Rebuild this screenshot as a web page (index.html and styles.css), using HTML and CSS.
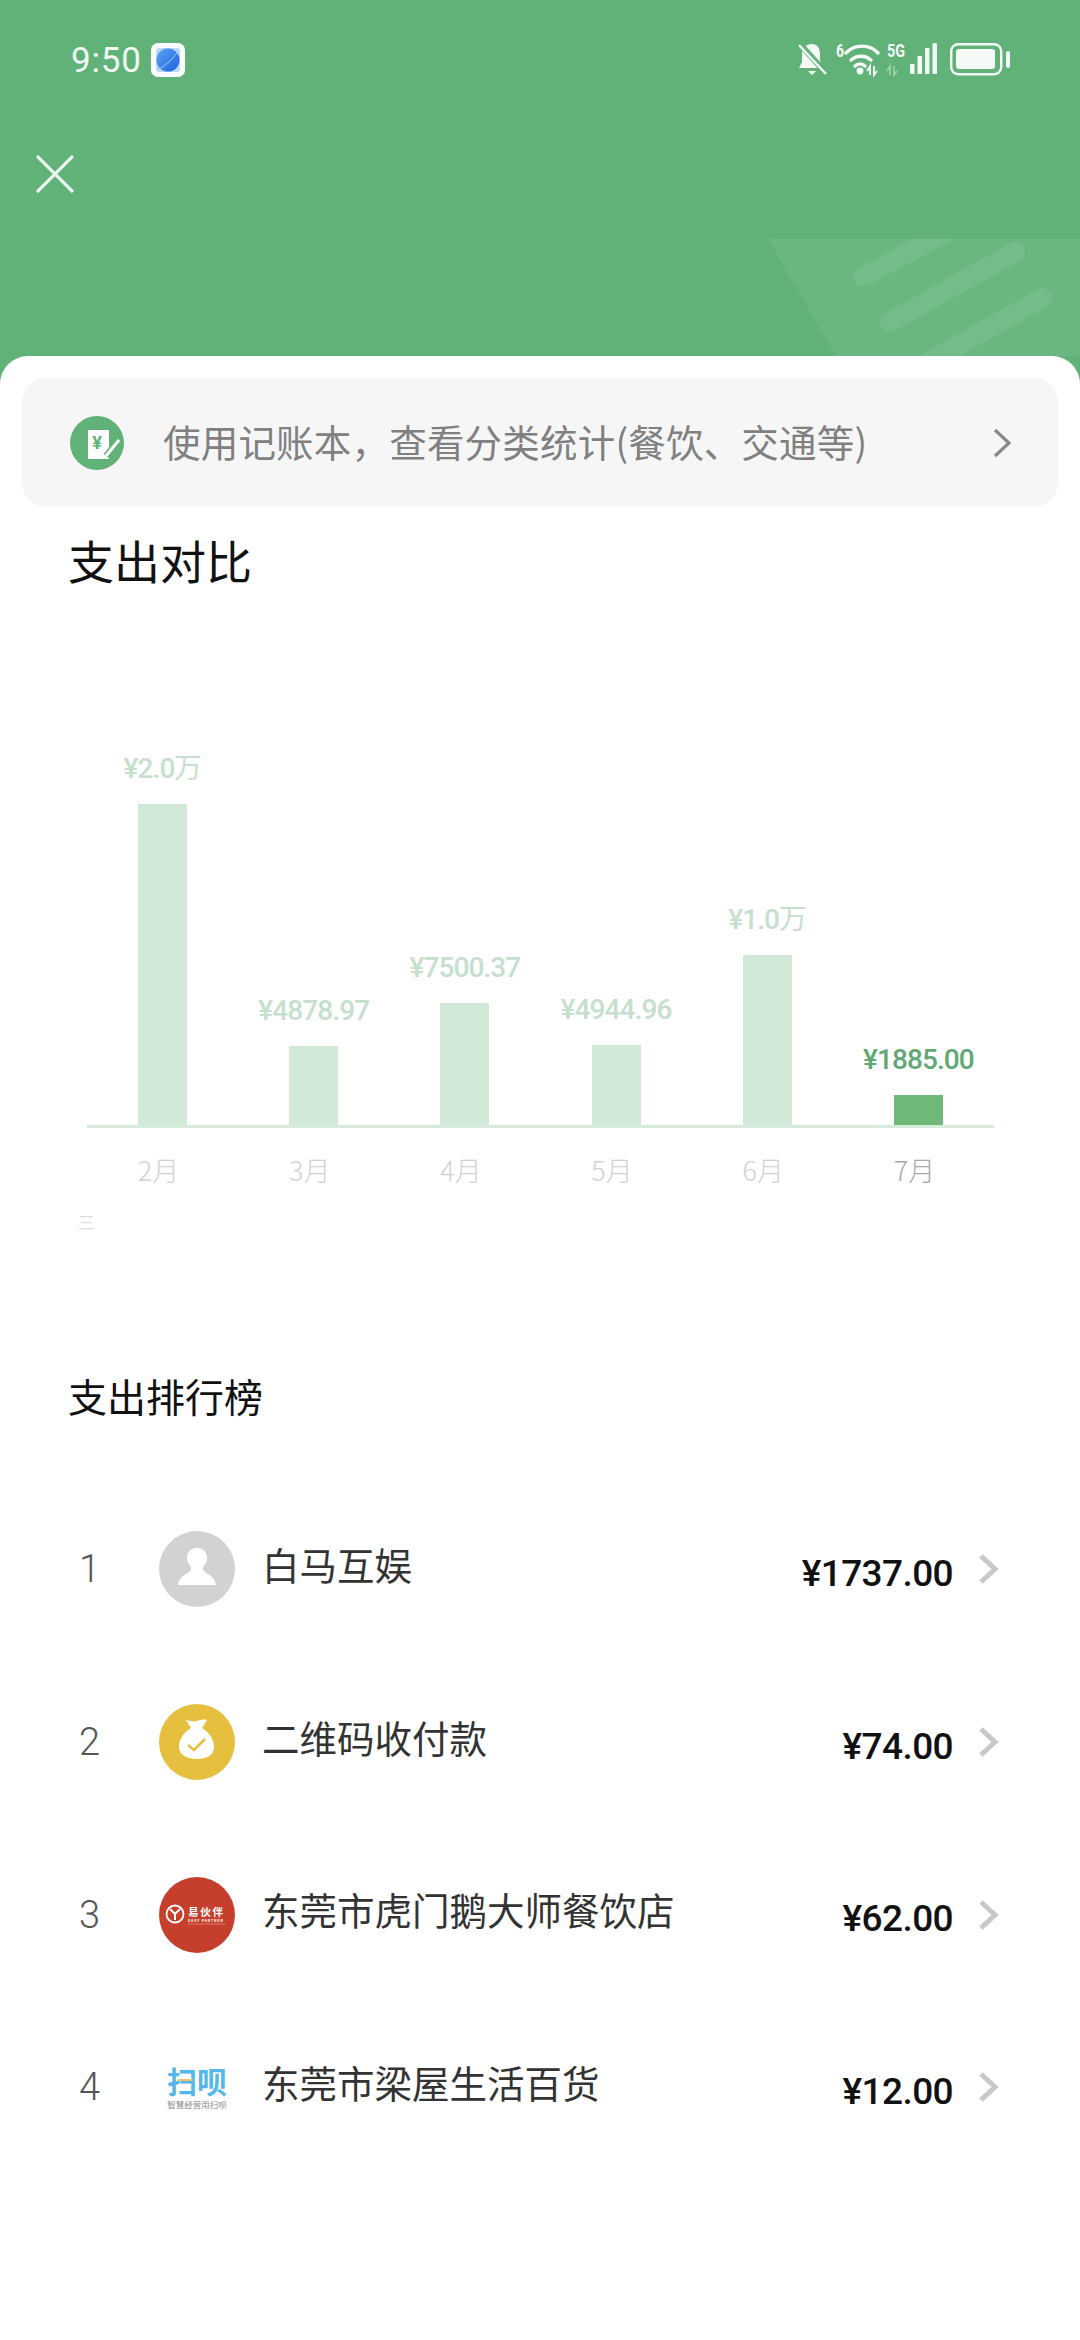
FILE: index.html
```html
<!DOCTYPE html>
<html lang="zh-CN">
<head>
  <meta charset="UTF-8" />
  <meta name="viewport" content="width=device-width, initial-scale=1.0"/>
  <title>支出统计</title>
  <link rel="stylesheet" href="styles.css">
</head>
<body>

  <header class="top">
    <div class="status">
      <div class="status-left">
        <span class="time">9:50</span>
        <svg class="app-icon" width="34" height="34" viewBox="0 0 34 34">
          <defs>
            <linearGradient id="planet" x1="0" y1="0" x2="1" y2="1">
              <stop offset="0" stop-color="#5aa4f2"/>
              <stop offset="1" stop-color="#1f5fe0"/>
            </linearGradient>
          </defs>
          <rect width="34" height="34" rx="7" fill="#fff"/>
          <rect x="5" y="5" width="24" height="24" rx="3" fill="#b9d8fb"/>
          <circle cx="17" cy="17" r="11.5" fill="url(#planet)"/>
          <path d="M6 27C12 25 25 14 28 6" fill="none" stroke="#a9d4fb" stroke-width=".9"/>
        </svg>
      </div>
      <svg class="status-right" width="230" height="60" viewBox="0 0 230 60">
        <path d="M22 14c5 0 8 4 8 10v6l2 8H9l3-6v-8c0-6 4-10 10-10z" fill="#f4faf6"/>
        <path d="M18 41h8l-4 4z" fill="#f4faf6"/>
        <path d="M9 13l27 30" stroke="#60b278" stroke-width="6"/>
        <path d="M9 15l27 29" stroke="#f4faf6" stroke-width="2.4"/>
        <text x="46" y="27" class="net-text" font-size="19" textLength="8" lengthAdjust="spacingAndGlyphs">6</text>
        <g fill="none" stroke="#f4faf6" stroke-linecap="round" stroke-width="3.4">
          <path d="M56 23A22 22 0 0 1 88 23"/>
          <path d="M61 30A15 15 0 0 1 81 30"/>
          <path d="M65 36A7 7 0 0 1 75 36"/>
        </g>
        <circle cx="70" cy="41" r="3.4" fill="#f4faf6"/>
        <path d="M80 45v-9l-3 5M84 36v9l3-4" fill="none" stroke="#f4faf6" stroke-width="1.8"/>
        <text x="97" y="27" class="net-text" font-size="18" textLength="18" lengthAdjust="spacingAndGlyphs">5G</text>
        <path d="M100 45v-9l-3 5M104 36v9l3-4" fill="none" stroke="#f4faf6" stroke-width="1.8" opacity=".4"/>
        <g fill="#f4faf6">
          <rect x="120" y="34" width="4.500" height="10" rx="1"/>
          <rect x="127.500" y="26" width="4.500" height="18" rx="1"/>
          <rect x="135" y="18" width="4.500" height="26" rx="1"/>
          <rect x="142.500" y="13" width="4.500" height="31" rx="1"/>
          <rect x="166" y="19" width="39" height="20" rx="3"/>
          <rect x="216" y="21" width="4" height="17" rx="2"/>
        </g>
        <rect x="161.200" y="14.200" width="50" height="30" rx="7" fill="none" stroke="#f4faf6" stroke-width="2.400"/>
      </svg>
    </div>

    <nav class="nav">
      <svg width="38" height="38" viewBox="0 0 38 38">
        <path d="M1 1l36 36M37 1L1 37" stroke="#eef8f1" stroke-width="3.2"/>
      </svg>
    </nav>

    <svg class="hero-band" width="1080" height="117" viewBox="0 0 1080 117">
      <polygon points="768,0 1080,0 1080,117 836,117" fill="#fff" fill-opacity=".07"/>
      <g stroke="#fff" stroke-opacity=".08" stroke-width="20" stroke-linecap="round" fill="none">
        <path d="M863 38L945 -6"/>
        <path d="M890 83L1015 13"/>
        <path d="M925 125L1042 59"/>
      </g>
    </svg>
  </header>

  <main class="sheet">
    <div class="tip">
      <svg width="54" height="54" viewBox="0 0 54 54">
        <circle cx="27" cy="27" r="27" fill="#60b278"/>
        <rect x="18" y="14" width="21" height="29" fill="#fff"/>
        <text x="27" y="33" class="tip-yen" font-size="18" text-anchor="middle">¥</text>
        <path d="M36 40L49 24" stroke="#60b278" stroke-width="6"/>
        <path d="M36 40L49 24" stroke="#fff" stroke-width="3"/>
      </svg>
      <span class="tip-text">使用记账本，查看分类统计(餐饮、交通等)</span>
      <svg class="tip-arrow" width="20" height="30" viewBox="0 0 20 30">
        <path d="M3 2l14 13L3 28" fill="none" stroke="#888" stroke-width="3.200"/>
      </svg>
    </div>

    <h2 class="compare-title">支出对比</h2>

    <div class="plot">
      <div class="col">
        <span class="value">¥2.0万</span>
        <div class="bar" style="height: 321px"></div>
      </div>
      <div class="col">
        <span class="value">¥4878.97</span>
        <div class="bar" style="height: 79px"></div>
      </div>
      <div class="col">
        <span class="value">¥7500.37</span>
        <div class="bar" style="height: 122px"></div>
      </div>
      <div class="col">
        <span class="value">¥4944.96</span>
        <div class="bar" style="height: 80px"></div>
      </div>
      <div class="col">
        <span class="value">¥1.0万</span>
        <div class="bar" style="height: 170px"></div>
      </div>
      <div class="col current">
        <span class="value">¥1885.00</span>
        <div class="bar" style="height: 30px"></div>
      </div>
    </div>
    <div class="months">
      <span>2月</span>
      <span>3月</span>
      <span>4月</span>
      <span>5月</span>
      <span>6月</span>
      <span class="current">7月</span>
    </div>
    <div class="stub">三</div>

    <h2 class="rank-title">支出排行榜</h2>

    <ul class="rank">
      <li class="row">
        <span class="num">1</span>
        <svg class="avatar" width="76" height="76" viewBox="0 0 76 76">
          <circle cx="38" cy="38" r="38" fill="#d2d2d2"/>
          <path d="M38 17c-6 0-10 4-10 10 0 4 2 7 4 9v3c-3 4-9 5-12 11l-1 4h38l-1-4c-3-6-9-7-12-11v-3c2-2 4-5 4-9 0-6-4-10-10-10z" fill="#fff"/>
        </svg>
        <span class="name">白马互娱</span>
        <span class="amount">¥1737.00</span>
        <svg class="arrow" width="20" height="30" viewBox="0 0 20 30">
          <path d="M2 2l14 13L2 28" fill="none" stroke="#c8c8cc" stroke-width="5"/>
        </svg>
      </li>
      <li class="row">
        <span class="num">2</span>
        <svg class="avatar" width="76" height="76" viewBox="0 0 76 76">
          <circle cx="38" cy="38" r="38" fill="#e6bf3f"/>
          <path d="M27 16c5 1 8 2 11 1 3-1 7-2 10-1l-5 8c7 4 12 11 12 19 0 8-7 12-17 12s-18-4-18-12c0-8 5-15 12-19z" fill="#fff"/>
          <path d="M29 41l6 5 11-11" fill="none" stroke="#e6bf3f" stroke-width="2.600"/>
        </svg>
        <span class="name">二维码收付款</span>
        <span class="amount">¥74.00</span>
        <svg class="arrow" width="20" height="30" viewBox="0 0 20 30">
          <path d="M2 2l14 13L2 28" fill="none" stroke="#c8c8cc" stroke-width="5"/>
        </svg>
      </li>
      <li class="row">
        <span class="num">3</span>
        <svg class="avatar" width="76" height="76" viewBox="0 0 76 76">
          <circle cx="38" cy="38" r="38" fill="#c63f2c"/>
          <circle cx="16" cy="37" r="8.500" fill="none" stroke="#fff" stroke-width="1.800"/>
          <path d="M11 32l5 5 5-5M16 37v6" fill="none" stroke="#fff" stroke-width="2"/>
          <text x="29" y="39" class="logo-text" font-size="10.500" textLength="35">易伙伴</text>
          <text x="29" y="45" class="logo-text" font-size="3.500" textLength="35">EASY PARTNER</text>
          <path d="M29 47h37" stroke="#e9a79b" stroke-width=".6"/>
        </svg>
        <span class="name">东莞市虎门鹅大师餐饮店</span>
        <span class="amount">¥62.00</span>
        <svg class="arrow" width="20" height="30" viewBox="0 0 20 30">
          <path d="M2 2l14 13L2 28" fill="none" stroke="#c8c8cc" stroke-width="5"/>
        </svg>
      </li>
      <li class="row">
        <span class="num">4</span>
        <div class="logo">
          <span class="logo-main">扫呗<i class="logo-bar"></i></span>
          <span class="logo-sub">智慧经营用扫呗</span>
        </div>
        <span class="name">东莞市梁屋生活百货</span>
        <span class="amount">¥12.00</span>
        <svg class="arrow" width="20" height="30" viewBox="0 0 20 30">
          <path d="M2 2l14 13L2 28" fill="none" stroke="#c8c8cc" stroke-width="5"/>
        </svg>
      </li>
    </ul>
  </main>

</body>
</html>
```

FILE: styles.css
```css
body {
  margin: 0;
  height: 2340px;
  overflow: hidden;
  background: #60b278;
  font-family: "Noto Sans CJK SC", Roboto, sans-serif;
}

h2, ul {
  margin: 0;
  padding: 0;
  font-weight: 400;
}

svg {
  display: block;
  flex: none;
}

/* green header */
.top {
  background: #60b278;
}

.status {
  height: 120px;
  padding: 0 60px 0 71px;
  display: flex;
  align-items: center;
  justify-content: space-between;
}

.status-left {
  display: flex;
  align-items: center;
  gap: 9px;
}

.time {
  font-family: Roboto, sans-serif;
  font-size: 35px;
  letter-spacing: 0.8px;
  color: #f1f9f3;
}

.net-text {
  font-family: Roboto, sans-serif;
  font-weight: 700;
  fill: #f4faf6;
}

.nav {
  box-sizing: border-box;
  height: 119px;
  padding: 0 0 12px 36px;
  display: flex;
  align-items: center;
}

/* white sheet */
.sheet {
  box-sizing: border-box;
  height: 1984px;
  background: #fff;
  border-radius: 28px 28px 0 0;
  padding-top: 22px;
}

.tip {
  margin: 0 22px;
  height: 129px;
  padding: 0 46px 0 48px;
  background: #f6f6f6;
  border-radius: 24px;
  display: flex;
  align-items: center;
  gap: 39px;
}

.tip-text {
  margin-bottom: 5px;
  font-size: 37.5px;
  letter-spacing: 0.2px;
  color: #808080;
  flex: 1;
  white-space: nowrap;
}

.tip-yen {
  font-family: Roboto, sans-serif;
  font-weight: 700;
  fill: #60b278;
}

.compare-title {
  margin: 22px 0 0 68px;
  font-size: 46px;
  line-height: 60px;
  color: #111;
}

/* bar chart */
.plot {
  margin: 0 0 0 87px;
  width: 907px;
  height: 536px;
  display: grid;
  grid-template-columns: repeat(6, 1fr);
  align-items: end;
  border-bottom: 3px solid #d6ebdb;
}

.col {
  display: flex;
  flex-direction: column;
  align-items: center;
  color: #c5e0cc;
}

.col.current {
  color: #62a875;
}

.value {
  font-family: Roboto, sans-serif;
  font-size: 28px;
  font-weight: 500;
  letter-spacing: -0.9px;
  line-height: 30px;
  margin-bottom: 20px;
  white-space: nowrap;
}

.bar {
  width: 49px;
  background: #d3e9d7;
}

.current .bar {
  background: #6fb878;
}

.months {
  margin-left: 87px;
  width: 907px;
  padding-top: 22px;
  display: grid;
  grid-template-columns: repeat(6, 1fr);
  font-size: 27px;
  font-weight: 300;
  line-height: 40px;
  text-align: center;
  color: #d2d2d2;
}

.months span {
  padding-right: 8px;
}

.months .current {
  color: #a8a8a8;
}

/* leftover legend glyph under the chart */
.stub {
  margin: 18px 0 0 78px;
  font-size: 17px;
  line-height: 28px;
  color: #ddd;
}

.rank-title {
  margin: 131px 0 0 68px;
  font-size: 39px;
  line-height: 56px;
  color: #111;
}

/* ranking list */
.rank {
  margin-top: 60px;
  list-style: none;
}

.row {
  height: 172.7px;
  padding: 0 81px 0 79px;
  display: flex;
  align-items: center;
}

.num {
  width: 80px;
  font-family: Roboto, sans-serif;
  font-size: 38px;
  font-weight: 300;
  color: #555;
}

.name {
  margin: 0 0 12px 27px;
  font-size: 37.5px;
  color: #333;
  white-space: nowrap;
}

.amount {
  margin: 8px 0 0 auto;
  font-family: Roboto, sans-serif;
  font-size: 37px;
  font-weight: 500;
  letter-spacing: -0.6px;
  color: #111;
}

.arrow {
  margin-left: 26px;
}

.logo-text {
  font-family: "Noto Sans CJK SC", sans-serif;
  font-weight: 700;
  fill: #fff;
}

/* small brand mark, text on top of a tiny rule */
.logo {
  width: 76px;
  display: flex;
  flex-direction: column;
  align-items: center;
}

.logo-main {
  position: relative;
  font-size: 30px;
  line-height: 34px;
  font-weight: 700;
  color: #55b6ec;
}

.logo-bar {
  position: absolute;
  left: 11px;
  top: 16px;
  width: 15px;
  height: 2px;
  background: #e9c46a;
}

.logo-sub {
  font-size: 8.5px;
  line-height: 14px;
  color: #888;
  white-space: nowrap;
}
```
